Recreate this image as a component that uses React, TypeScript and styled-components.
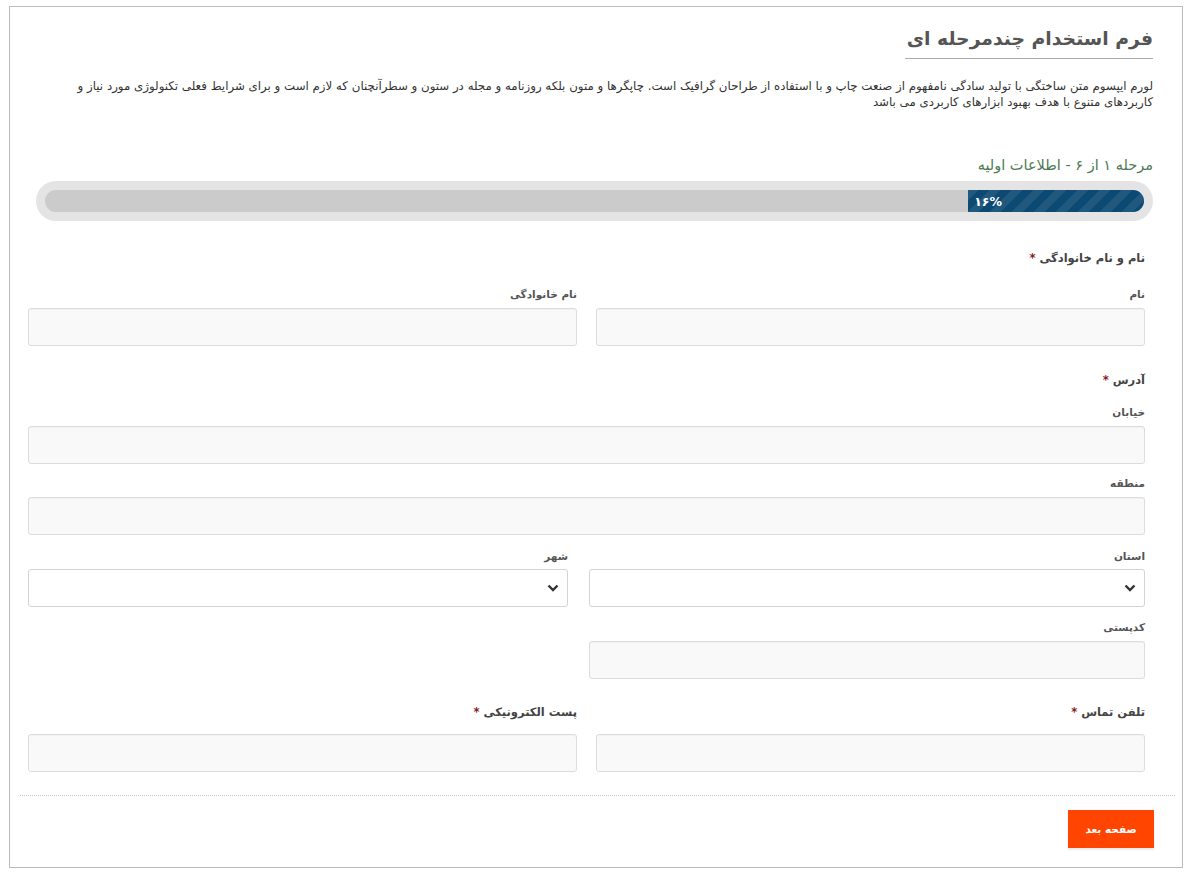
import styled, { createGlobalStyle } from "styled-components";

const GlobalStyle = createGlobalStyle`
  html, body {
    margin: 0;
    padding: 0;
    background: #fff;
  }
  body {
    font-family: "DejaVu Sans", "Noto Sans", sans-serif;
    color: #555;
  }
  * {
    box-sizing: border-box;
  }
`;

const Frame = styled.div`
  direction: rtl;
  margin: 6px 9px 0 9px;
  height: 862px;
  border: 1px solid #bbb;
  display: flex;
  flex-direction: column;
`;

const Header = styled.div`
  padding: 17px 29px 0 28px;
`;

const Title = styled.h1`
  display: inline-block;
  margin: 0;
  padding: 0 0 4px 2px;
  font-size: 18.8px;
  line-height: 30px;
  font-weight: bold;
  color: #555;
  border-bottom: 1px solid #aaa;
`;

const Description = styled.p`
  margin: 19px 0 0 0;
  font-size: 11.8px;
  line-height: 16px;
  font-weight: normal;
  color: #333;
`;

const StepTitle = styled.h3`
  margin: 44px 0 0 0;
  font-size: 14.5px;
  line-height: 22px;
  font-weight: normal;
  color: #4d7a52;
`;

const ProgressOuter = styled.div`
  margin: 5px 0 0 -2px;
  height: 40px;
  padding: 9px;
  border-radius: 20px;
  background: #e4e4e4;
`;

const ProgressTrack = styled.div`
  height: 22px;
  border-radius: 11px;
  background: #cbcbcb;
  overflow: hidden;
  display: flex;
`;

const ProgressFill = styled.div`
  height: 100%;
  background-color: #0d4a73;
  background-image: linear-gradient(
    135deg,
    rgba(255, 255, 255, 0.08) 25%,
    transparent 25%,
    transparent 50%,
    rgba(255, 255, 255, 0.08) 50%,
    rgba(255, 255, 255, 0.08) 75%,
    transparent 75%,
    transparent
  );
  background-size: 22px 22px;
  display: flex;
  align-items: center;
  justify-content: flex-end;
  padding-left: 6px;
`;

const ProgressText = styled.span`
  direction: ltr;
  color: #fff;
  font-size: 12.5px;
  font-weight: bold;
`;

const Form = styled.div`
  padding: 0 37px 0 18px;
`;

const Row = styled.div<{ $top: number; $cols?: string; $gap?: number }>`
  display: grid;
  grid-template-columns: ${(p) => p.$cols || "1fr 1fr"};
  column-gap: ${(p) => p.$gap ?? 19}px;
  margin-top: ${(p) => p.$top}px;
`;

const GroupLabel = styled.div<{ $top: number }>`
  margin-top: ${(p) => p.$top}px;
  font-size: 11.5px;
  line-height: 20px;
  font-weight: bold;
  color: #444;
`;

const Star = styled.span`
  color: #8b1a1a;
  margin-right: 4px;
`;

const Field = styled.div<{ $top?: number }>`
  margin-top: ${(p) => p.$top ?? 0}px;
  display: flex;
  flex-direction: column;
`;

const SubLabel = styled.label<{ $gap?: number }>`
  font-size: 10.5px;
  line-height: 16px;
  font-weight: bold;
  color: #555;
  margin-bottom: ${(p) => p.$gap ?? 6}px;
`;

const FieldLabel = styled.label`
  font-size: 11.5px;
  line-height: 20px;
  font-weight: bold;
  color: #444;
  margin-bottom: 12px;
`;

const Input = styled.input`
  height: 38px;
  width: 100%;
  border: 1px solid #dcdcdc;
  border-radius: 3px;
  background: #f9f9f9;
  box-shadow: inset 0 1px 1px rgba(0, 0, 0, 0.03);
  outline: none;
`;

const SelectBox = styled.div`
  height: 38px;
  width: 100%;
  border: 1px solid #d4d4d4;
  border-radius: 3px;
  background: #fff;
  display: flex;
  align-items: center;
  justify-content: flex-start;
  padding-right: 8px;
`;

const Divider = styled.div`
  margin: 23px 7px 0 10px;
  border-top: 1px dotted #c8c8c8;
`;

const Footer = styled.div`
  padding: 14px 28px 0 0;
  display: flex;
`;

const NextButton = styled.button`
  width: 86px;
  height: 38px;
  border: none;
  background: #ff4500;
  color: #fff;
  font-family: inherit;
  font-size: 10.5px;
  font-weight: bold;
  box-shadow: 0 2px 2px rgba(0, 0, 0, 0.08);
`;

const Chevron = () => (
  <svg width="12" height="8" viewBox="0 0 12 8">
    <path d="M1.5 1.5 L6 6 L10.5 1.5" fill="none" stroke="#333" strokeWidth="2.4" />
  </svg>
);

const Select = () => (
  <SelectBox>
    <Chevron />
  </SelectBox>
);

export default function App() {
  return (
    <>
      <GlobalStyle />
      <Frame>
        <Header>
          <Title>فرم استخدام چندمرحله ای</Title>
          <Description>
            لورم ایپسوم متن ساختگی با تولید سادگی نامفهوم از صنعت چاپ و با استفاده از طراحان گرافیک است. چاپگرها و متون بلکه روزنامه و مجله در ستون و سطرآنچنان که لازم است و برای شرایط فعلی تکنولوژی مورد نیاز و کاربردهای متنوع با هدف بهبود ابزارهای کاربردی می باشد
          </Description>
          <StepTitle>مرحله ۱ از ۶ - اطلاعات اولیه</StepTitle>
          <ProgressOuter>
            <ProgressTrack>
              <ProgressFill style={{ width: "16%" }}>
                <ProgressText>۱۶%</ProgressText>
              </ProgressFill>
            </ProgressTrack>
          </ProgressOuter>
        </Header>
        <Form>
          <GroupLabel $top={27}>
            نام و نام خانوادگی<Star>*</Star>
          </GroupLabel>
          <Row $top={18}>
            <Field>
              <SubLabel>نام</SubLabel>
              <Input />
            </Field>
            <Field>
              <SubLabel>نام خانوادگی</SubLabel>
              <Input />
            </Field>
          </Row>
          <GroupLabel $top={24}>
            آدرس<Star>*</Star>
          </GroupLabel>
          <Field $top={14}>
            <SubLabel>خیابان</SubLabel>
            <Input />
          </Field>
          <Field $top={11}>
            <SubLabel>منطقه</SubLabel>
            <Input />
          </Field>
          <Row $top={13} $cols="556px 1fr" $gap={21}>
            <Field>
              <SubLabel $gap={5}>استان</SubLabel>
              <Select />
            </Field>
            <Field>
              <SubLabel $gap={5}>شهر</SubLabel>
              <Select />
            </Field>
          </Row>
          <Row $top={12} $cols="556px 1fr" $gap={21}>
            <Field>
              <SubLabel>کدپستی</SubLabel>
              <Input />
            </Field>
          </Row>
          <Row $top={23}>
            <Field>
              <FieldLabel>
                تلفن تماس<Star>*</Star>
              </FieldLabel>
              <Input />
            </Field>
            <Field>
              <FieldLabel>
                پست الکترونیکی<Star>*</Star>
              </FieldLabel>
              <Input />
            </Field>
          </Row>
        </Form>
        <Divider />
        <Footer>
          <NextButton>صفحه بعد</NextButton>
        </Footer>
      </Frame>
    </>
  );
}
